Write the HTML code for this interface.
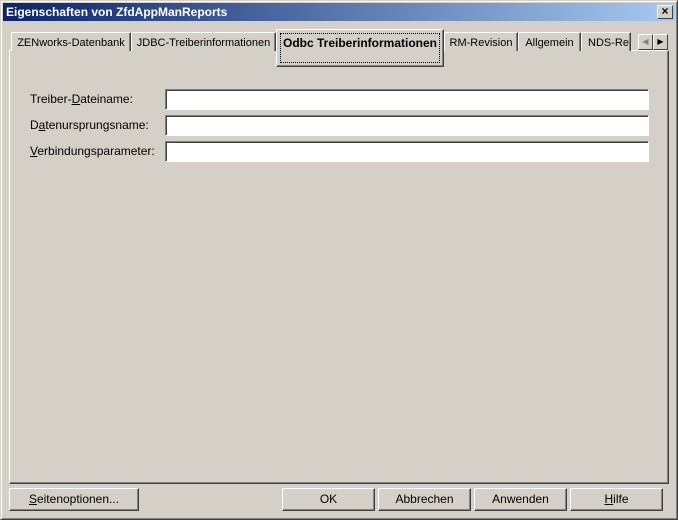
<!DOCTYPE html>
<html><head><style>
*{box-sizing:border-box}
body{margin:0;width:678px;height:520px;overflow:hidden;background:#d4d0c8;font-family:"Liberation Sans",sans-serif;font-size:11px;color:#000;position:relative}
.win{position:absolute;left:0;top:0;width:678px;height:520px;border:1px solid;border-color:#d4d0c8 #404040 #404040 #d4d0c8;box-shadow:inset 1px 1px #fff,inset -1px -1px #808080}
.title{position:absolute;left:3px;top:3px;width:672px;height:18px;background:linear-gradient(to right,#0a246a,#a6caf0);color:#fff;font-weight:bold;font-size:12px;line-height:18px;padding-left:3px}
.x{position:absolute;right:5px;top:5px;width:16px;height:14px;background:#d4d0c8;border:1px solid;border-color:#fff #404040 #404040 #fff;font-size:12px;line-height:11px;text-align:center;color:#000;font-weight:bold}
.panel{position:absolute;left:9px;top:50px;width:660px;height:434px;border:1px solid;border-color:#fff #404040 #404040 #fff;box-shadow:inset -1px -1px #808080}
.tab{position:absolute;top:32px;height:19px;border:1px solid;border-bottom:none;border-color:#fff #404040 #404040 #fff;box-shadow:inset -1px 0 #808080;line-height:20px;text-align:center;background:#d4d0c8;white-space:nowrap;overflow:hidden}
.act{top:29px;height:38px;font-weight:bold;font-size:12px;line-height:26px;border-bottom:1px solid #404040;box-shadow:inset -1px -1px #808080;z-index:2}
.act span{position:absolute;left:3px;top:3px;right:3px;bottom:3px;border:1px dotted #000}
.lbl{position:absolute;left:30px;font-size:12px}
.inp{position:absolute;left:165px;width:484px;height:21px;background:#fff;border:1px solid;border-color:#808080 #fff #fff #808080;box-shadow:inset 1px 1px #404040}
.btn{position:absolute;top:488px;height:23px;border:1px solid;border-color:#fff #404040 #404040 #fff;box-shadow:inset -1px -1px #808080;text-align:center;line-height:21px;font-size:12px}
.arr{position:absolute;top:34px;width:15px;height:16px;border:1px solid;border-color:#fff #404040 #404040 #fff;font-size:8px;text-align:center;line-height:14px}
u{text-decoration:underline}
</style></head><body>
<div class="win"></div>
<div class="title">Eigenschaften von ZfdAppManReports</div>
<div class="x">×</div>
<div class="panel"></div>
<div class="tab" style="left:11px;width:120px">ZENworks-Datenbank</div>
<div class="tab" style="left:131px;width:145px">JDBC-Treiberinformationen</div>
<div class="tab act" style="left:276px;width:168px"><span></span>Odbc Treiberinformationen</div>
<div class="tab" style="left:444px;width:74px">RM-Revision</div>
<div class="tab" style="left:518px;width:63px">Allgemein</div>
<div class="tab" style="left:581px;width:50px;text-align:left;padding-left:6px">NDS-Re</div>
<div class="arr" style="left:638px;color:#808080">◀</div>
<div class="arr" style="left:653px">▶</div>
<div class="lbl" style="top:92px">Treiber-<u>D</u>ateiname:</div>
<div class="lbl" style="top:118px">D<u>a</u>tenursprungsname:</div>
<div class="lbl" style="top:144px"><u>V</u>erbindungsparameter:</div>
<div class="inp" style="top:89px"></div>
<div class="inp" style="top:115px"></div>
<div class="inp" style="top:141px"></div>
<div class="btn" style="left:9px;width:130px"><u>S</u>eitenoptionen...</div>
<div class="btn" style="left:282px;width:93px">OK</div>
<div class="btn" style="left:378px;width:93px">Abbrechen</div>
<div class="btn" style="left:474px;width:93px">Anwenden</div>
<div class="btn" style="left:570px;width:93px"><u>H</u>ilfe</div>
</body></html>
